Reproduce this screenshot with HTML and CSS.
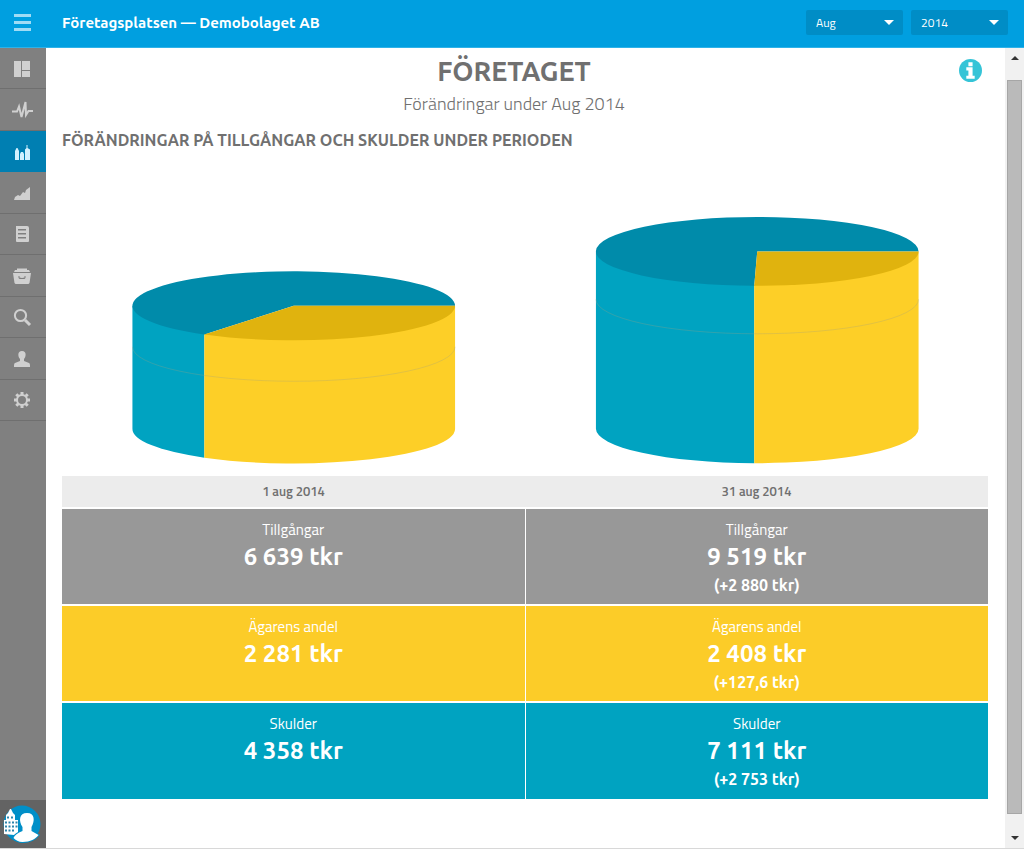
FILE: index.html
```html
<!DOCTYPE html>
<html lang="sv">
<head>
<meta charset="utf-8">
<meta name="viewport" content="width=device-width, initial-scale=1">
<title>Företagsplatsen — Demobolaget AB</title>
<link rel="stylesheet" href="styles.css">
</head>
<body>
<div class="app">
  <header class="topbar">
    <button class="menu-button" type="button" aria-label="Meny">
      <svg class="menu-icon" viewBox="0 0 17 17"><path d="M0 0h17v3H0zM0 7h17v3H0zM0 14h17v3H0z"/></svg>
    </button>
    <span class="brand">Företagsplatsen — Demobolaget AB</span>
    <div class="period">
      <div class="picker">
        <select class="picker-select" aria-label="Månad"><option>Aug</option></select>
        <svg class="picker-arrow" viewBox="0 0 10 5"><path d="M0 0h10L5 5z"/></svg>
      </div>
      <div class="picker">
        <select class="picker-select" aria-label="År"><option>2014</option></select>
        <svg class="picker-arrow" viewBox="0 0 10 5"><path d="M0 0h10L5 5z"/></svg>
      </div>
    </div>
  </header>
  <div class="body">
    <div class="sidebar">
      <nav class="nav">
        <a class="nav-item" href="#" aria-label="Översikt"><svg class="icon" viewBox="0 0 24 24"><path d="M4 4h7v16H4zM12 4h8v9h-8zM12 14h8v6h-8z"/></svg></a>
        <a class="nav-item" href="#" aria-label="Puls"><svg class="icon" viewBox="0 0 24 24"><path class="line" d="M2 13.500h5l2-5 2.500 10.500L15.500 4l.5 13 2.500-4H23"/></svg></a>
        <a class="nav-item active" href="#" aria-label="Företaget"><svg class="icon" viewBox="0 0 24 24"><path d="M5 20v-9l1.500-3h1L9 11v9zM10 20v-6l1-2h2l1 2v6zM15 20V9.500L16.500 8V5h1v3L20 9.500V20z"/></svg></a>
        <a class="nav-item" href="#" aria-label="Utveckling"><svg class="icon" viewBox="0 0 24 24"><path d="M4 19l1-3 3-2 2 1 3-4 2 1 1-3 4-3v13z"/></svg></a>
        <a class="nav-item" href="#" aria-label="Rapporter"><svg class="icon" viewBox="0 0 24 24"><path fill-rule="evenodd" d="M6 4h11q2 0 2 2v13q0 1-1 1H7q-1 0-1-1zM8 7v1.500h8V7zm0 4v1.500h8V11zm0 4v1.500h8V15z"/></svg></a>
        <a class="nav-item" href="#" aria-label="Arkiv"><svg class="icon" viewBox="0 0 24 24"><path fill-rule="evenodd" d="M7 4.500h10V6h2l1 2H4l1-2h2zM3 9h18l-1.500 10-1 1h-13l-1-1zM8.500 12v2l1 1h5l1-1v-2h-1v1.500l-2.500.5-2.500-.5V12z"/></svg></a>
        <a class="nav-item" href="#" aria-label="Sök"><svg class="icon" viewBox="0 0 24 24"><circle class="line" cx="10.500" cy="10.500" r="5.600"/><path class="line thick" d="M15 15l5 5"/></svg></a>
        <a class="nav-item" href="#" aria-label="Användare"><svg class="icon" viewBox="0 0 24 24"><path d="M12 4c5 0 4 6 2 8v2l5 2c1 .5 1 2 1 4H4c0-2 0-3.500 1-4l5-2v-2C8 10 7 4 12 4z"/></svg></a>
        <a class="nav-item" href="#" aria-label="Inställningar"><svg class="icon" viewBox="0 0 24 24"><circle class="line" cx="12" cy="12" r="5"/><path class="line teeth" d="M12 4v3M12 17v3M4 12h3M17 12h3M6.300 6.300l2 2M15.700 15.700l2 2M6.300 17.700l2-2M15.700 8.300l2-2"/></svg></a>
      </nav>
      <a class="account" href="#" aria-label="Konto">
        <svg class="account-icon" viewBox="0 0 38 38">
          <circle class="blue" cx="19" cy="19" r="18.500"/>
          <path class="white" d="M1 15h2V10l2-2 2-4h1l2 4 2 2v5h3v13l-4 2-10-1z"/>
          <path class="windows" d="M4 12.500h2M8 12.500h2M2 17.500h2M5.500 17.500h2M9 17.500h2M12.500 17.500h2M2 21.500h2M5.500 21.500h2M9 21.500h2M12.500 21.500h2M2 25.500h2M5.500 25.500h2M9 25.500h2"/>
          <path class="person" d="M24 8c8 0 8 8 4.500 14v4l7 4c-3 4-8 7-16 7-4 0-7-2-9-4 1-3 4-5 9-7v-4c-4-6-3.500-14 4.500-14z"/>
        </svg>
      </a>
    </div>
    <main class="content">
      <div class="heading">
        <div class="heading-text">
          <h1 class="title">FÖRETAGET</h1>
          <p class="subtitle">Förändringar under Aug 2014</p>
        </div>
        <button class="info" type="button" aria-label="Information">
          <svg class="info-icon" viewBox="0 0 22 22"><circle cx="11" cy="11" r="11"/><path class="mark" d="M9 3h4v4H9zM7 8h6v8h2v3H7v-3h2v-5H7z"/></svg>
        </button>
      </div>
      <h2 class="section-title">FÖRÄNDRINGAR PÅ TILLGÅNGAR OCH SKULDER UNDER PERIODEN</h2>
      <div class="charts">
        <svg class="chart" viewBox="0 0 463 320" role="img" aria-label="Fördelning 1 aug 2014">
          <path class="debt" d="M70.500 150V273A161.500 34.500 0 0 0 142.500 302V178z"/>
          <path class="owner" d="M142.500 178V302A161.500 34.500 0 0 0 393.500 273V150z"/>
          <path class="debt-top" d="M232 150H393.500A161.500 34.500 0 1 0 142.500 178.700z"/>
          <path class="owner-top" d="M232 150H393.500A161.500 34.500 0 0 1 142.500 178.700z"/>
          <path class="seam" d="M70.500 191A161.500 34.500 0 0 0 393.500 191"/>
        </svg>
        <svg class="chart" viewBox="0 0 463 320" role="img" aria-label="Fördelning 31 aug 2014">
          <path class="debt" d="M70 95.500V273A161.500 34.500 0 0 0 228.500 307.500V129z"/>
          <path class="owner" d="M228.500 129V307.500A161.500 34.500 0 0 0 393 273V95.500z"/>
          <path class="debt-top" d="M231.500 95.500H393A161.500 34.500 0 1 0 228.500 130z"/>
          <path class="owner-top" d="M231.500 95.500H393A161.500 34.500 0 0 1 228.500 130z"/>
          <path class="seam" d="M70 143.500A161.500 34.500 0 0 0 393 143.500"/>
        </svg>
      </div>
      <table class="figures">
        <thead><tr><th scope="col">1 aug 2014</th><th scope="col">31 aug 2014</th></tr></thead>
        <tbody>
          <tr class="row-assets">
            <td><div class="label">Tillgångar</div><div class="amount">6 639 tkr</div></td>
            <td><div class="label">Tillgångar</div><div class="amount">9 519 tkr</div><div class="change">(+2 880 tkr)</div></td>
          </tr>
          <tr class="row-owner">
            <td><div class="label">Ägarens andel</div><div class="amount">2 281 tkr</div></td>
            <td><div class="label">Ägarens andel</div><div class="amount">2 408 tkr</div><div class="change">(+127,6 tkr)</div></td>
          </tr>
          <tr class="row-debt">
            <td><div class="label">Skulder</div><div class="amount">4 358 tkr</div></td>
            <td><div class="label">Skulder</div><div class="amount">7 111 tkr</div><div class="change">(+2 753 tkr)</div></td>
          </tr>
        </tbody>
      </table>
    </main>
    <div class="scrollbar" aria-hidden="true">
      <svg class="scroll-arrow" viewBox="0 0 8 4"><path d="M0 4h8L4 0z"/></svg>
      <div class="scroll-thumb"></div>
      <svg class="scroll-arrow" viewBox="0 0 8 4"><path d="M0 0h8L4 4z"/></svg>
    </div>
  </div>
</div>
</body>
</html>
```
FILE: styles.css
```css
* { box-sizing: border-box; }
body {
  margin: 0;
  background: #fff;
  color: #707070;
  font-family: Ubuntu, "Noto Sans", sans-serif;
}
button { border: 0; padding: 0; background: none; cursor: pointer; }
svg { display: block; }

.app { display: flex; flex-direction: column; min-height: 100vh; border-bottom: 1px solid #d8d8d8; }

.topbar {
  display: flex;
  align-items: center;
  height: 48px;
  padding: 0 16px 2px 0;
  background: #009fe0;
  border-bottom: 1px solid #2fb2e8;
  color: #fff;
}
.menu-button { display: flex; justify-content: center; width: 46px; padding-right: 1px; }
.menu-icon { width: 17px; height: 17px; fill: #a0dcf5; }
.brand { flex: 1; padding-left: 16px; font-size: 15px; font-weight: 700; }
.period { display: flex; gap: 8px; }
.picker { position: relative; }
.picker-select {
  display: block;
  appearance: none;
  width: 97px;
  height: 25px;
  padding: 0 10px;
  border: 0;
  border-radius: 2px;
  background: #008dc6;
  color: #fff;
  font-family: "Titillium Web", "Open Sans", sans-serif;
  font-size: 12px;
}
.picker-arrow { position: absolute; right: 9px; top: 10px; width: 10px; height: 5px; fill: #fff; pointer-events: none; }

.body { display: flex; flex: 1; }

.sidebar { display: flex; flex-direction: column; justify-content: space-between; width: 46px; background: #808080; }
.nav { display: grid; grid-auto-rows: 1fr; height: 373px; }
.nav-item { display: flex; align-items: center; justify-content: center; padding: 1px 2px 0 0; border-bottom: 1px solid #6f6f6f; }
.nav-item.active { background: #007fb2; border-color: #007fb2; }
.icon { width: 24px; height: 24px; fill: #d0d0d0; stroke: #d0d0d0; stroke-width: 0; }
.active .icon { fill: #d3f1ff; }
.icon .line { fill: none; stroke-width: 2; }
.icon .thick { stroke-width: 3; }
.icon .teeth { stroke-width: 3; }
.account { display: flex; align-items: center; justify-content: center; height: 48px; padding-right: 2px; background: #636363; }
.account-icon { width: 38px; height: 38px; }
.account-icon .blue { fill: #008fc8; }
.account-icon .white { fill: #fff; }
.account-icon .person { fill: #fff; stroke: #008fc8; stroke-width: 2; paint-order: stroke; }
.account-icon .windows { fill: none; stroke: #2d86ad; stroke-width: 2; }

.content { flex: 1; min-width: 0; padding: 7px 17px 0 16px; }
.heading { display: grid; grid-template-columns: 8px 1fr 30px; }
.heading-text { grid-column: 2; text-align: center; }
.title { margin: 0; font-size: 27px; line-height: 32px; font-weight: 700; }
.info { width: 24px; height: 22px; margin-top: 4px; padding-left: 1px; }
.info-icon { width: 23px; height: 23px; fill: #35c4d7; }
.info-icon .mark { fill: #fff; }
.subtitle {
  margin: 5px 0 0;
  font-family: "Titillium Web", "Open Sans", sans-serif;
  font-size: 18px;
  line-height: 24px;
  font-weight: 300;
}
.section-title { margin: 12px 0 0; font-size: 16px; line-height: 24px; font-weight: 700; }

.charts { display: grid; grid-template-columns: 1fr 1fr; gap: 1px; margin-top: 4px; }
.chart { width: 100%; height: auto; }
.debt { fill: #00a3c1; }
.debt-top { fill: #008baa; }
.owner { fill: #fdcf27; }
.owner-top { fill: #e0b30e; }
.seam { fill: none; stroke: #a0a080; stroke-width: 1; opacity: .3; }

.figures { width: 100%; table-layout: fixed; border-collapse: collapse; font-family: "Titillium Web", "Open Sans", sans-serif; }
.figures th { height: 32px; padding: 0; background: #ececec; font-size: 13px; font-weight: 600; }
.figures td {
  height: 97px;
  padding: 11px 0 0;
  border-top: 2px solid #fff;
  color: #fff;
  text-align: center;
  vertical-align: top;
}
.figures td + td { border-left: 1px solid #fff; }
.row-assets { background: #989898; }
.row-owner { background: #fccc28; }
.row-debt { background: #00a3c1; }
.label { font-size: 15px; line-height: 20px; }
.amount { font-family: Ubuntu, "Noto Sans", sans-serif; font-size: 24px; line-height: 34px; font-weight: 600; }
.change { font-family: Ubuntu, "Noto Sans", sans-serif; font-size: 16px; line-height: 22px; font-weight: 600; }

.scrollbar { display: flex; flex-direction: column; align-items: center; width: 19px; padding: 8px 2px; background: #f1f1f1; }
.scroll-arrow { width: 8px; height: 4px; fill: #333; }
.scroll-thumb { flex: 1; width: 15px; margin: 20px 0 22px; border: 1px solid #a6a6a6; background: #bababa; }
```
